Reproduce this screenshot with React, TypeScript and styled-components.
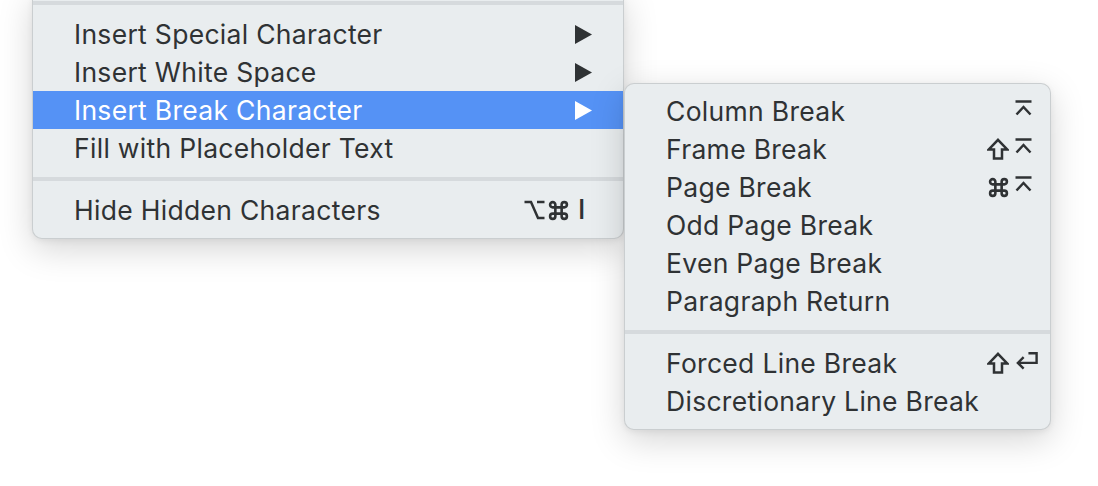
import React from "react";
import styled, { createGlobalStyle } from "styled-components";

const Global = createGlobalStyle`
  html, body { margin: 0; padding: 0; background: #ffffff; }
  body { font-family: Inter, "Noto Sans", "Liberation Sans", sans-serif; overflow: hidden; }
`;

const INK = "#2f3234";

const Page = styled.div`
  display: flex;
  align-items: flex-start;
  padding-left: 32px;
  width: 1098px;
  height: 486px;
  box-sizing: border-box;
  overflow: hidden;
`;

const MenuPanel = styled.div<{ $top: number; $width: number; $padR: number; $padT: number }>`
  display: flex;
  flex-direction: column;
  margin-top: ${(p) => p.$top}px;
  width: ${(p) => p.$width}px;
  padding: ${(p) => p.$padT}px 0 9px 0;
  box-sizing: border-box;
  background: #e9edef;
  border: 1px solid rgba(0, 0, 0, 0.13);
  border-radius: 10px;
  box-shadow: 0 10px 34px rgba(0, 0, 0, 0.17), 0 2px 6px rgba(0, 0, 0, 0.06);
  --pad-r: ${(p) => p.$padR}px;
  position: relative;
`;

const Row = styled.div<{ $active?: boolean }>`
  display: flex;
  align-items: center;
  justify-content: space-between;
  height: 38px;
  padding-left: 41px;
  padding-right: var(--pad-r);
  background: ${(p) => (p.$active ? "#5592f5" : "transparent")};
  color: ${(p) => (p.$active ? "#ffffff" : INK)};
  font-size: 26.5px;
  letter-spacing: 0.3px;
  white-space: nowrap;
`;

const Label = styled.span`
  line-height: 38px;
`;

const Trailing = styled.div`
  display: flex;
  align-items: center;
  gap: 6px;
`;

const Mods = styled.div`
  display: flex;
  align-items: center;
  gap: 3px;
`;

const KeyCell = styled.div`
  width: 24px;
  display: flex;
  align-items: center;
  justify-content: flex-start;
  line-height: 38px;
`;

const KeyText = styled.span`
  padding-left: 3px;
  font-size: 27px;
  font-weight: 500;
`;

const Separator = styled.div`
  height: 24px;
  display: flex;
  align-items: center;
  &::after {
    content: "";
    display: block;
    width: 100%;
    height: 4px;
    background: #d6dadd;
  }
`;

const Glyph = styled.svg`
  display: block;
  fill: none;
  stroke: currentColor;
  stroke-width: 2.5;
  stroke-linejoin: miter;
`;

const Arrow = () => (
  <svg width="17" height="19" viewBox="0 0 17 19" style={{ display: "block" }}>
    <polygon points="0,0 17,9.5 0,19" fill="currentColor" />
  </svg>
);

const Enter = () => (
  <Glyph width="17" height="16" viewBox="0 0 17 16" style={{ marginTop: -6 }}>
    <path d="M0.5 1.5 H16.5" />
    <path d="M1.5 14.5 L8.5 7 L15.5 14.5" />
  </Glyph>
);

const Shift = () => (
  <Glyph width="22" height="22" viewBox="0 0 22 22">
    <path d="M11 1.8 L20.2 11.5 H15 V20.5 H7 V11.5 H1.8 Z" />
  </Glyph>
);

const Cmd = () => (
  <Glyph width="21" height="21" viewBox="0 0 20 20">
    <path d="M7 7 V4.5 A2.5 2.5 0 1 0 4.5 7 H15.5 A2.5 2.5 0 1 0 13 4.5 V15.5 A2.5 2.5 0 1 0 15.5 13 H4.5 A2.5 2.5 0 1 0 7 15.5 Z" />
  </Glyph>
);

const Opt = () => (
  <Glyph width="21" height="20" viewBox="0 0 21 20">
    <path d="M0.5 2 H7 L14 18 H20.5" />
    <path d="M13 2 H20.5" />
  </Glyph>
);

const Return = () => (
  <Glyph width="25" height="20" viewBox="0 0 25 20" style={{ marginTop: -4 }}>
    <path d="M14 2 H22.5 V12 H3" />
    <path d="M9 6 L3 12 L9 18" />
  </Glyph>
);

type Item =
  | { kind: "sep" }
  | {
      kind: "item";
      label: string;
      active?: boolean;
      sub?: boolean;
      mods?: React.ReactNode[];
      keyGlyph?: React.ReactNode;
    };

const mainItems: Item[] = [
  { kind: "sep" },
  { kind: "item", label: "Insert Special Character", sub: true },
  { kind: "item", label: "Insert White Space", sub: true },
  { kind: "item", label: "Insert Break Character", sub: true, active: true },
  { kind: "item", label: "Fill with Placeholder Text" },
  { kind: "sep" },
  {
    kind: "item",
    label: "Hide Hidden Characters",
    mods: [<Opt key="o" />, <Cmd key="c" />],
    keyGlyph: <KeyText>I</KeyText>,
  },
];

const subItems: Item[] = [
  { kind: "item", label: "Column Break", mods: [], keyGlyph: <Enter /> },
  { kind: "item", label: "Frame Break", mods: [<Shift key="s" />], keyGlyph: <Enter /> },
  { kind: "item", label: "Page Break", mods: [<Cmd key="c" />], keyGlyph: <Enter /> },
  { kind: "item", label: "Odd Page Break" },
  { kind: "item", label: "Even Page Break" },
  { kind: "item", label: "Paragraph Return" },
  { kind: "sep" },
  { kind: "item", label: "Forced Line Break", mods: [<Shift key="s" />], keyGlyph: <Return /> },
  { kind: "item", label: "Discretionary Line Break" },
];

const MenuRows = ({ items }: { items: Item[] }) => (
  <>
    {items.map((it, i) =>
      it.kind === "sep" ? (
        <Separator key={i} />
      ) : (
        <Row key={i} $active={it.active}>
          <Label>{it.label}</Label>
          <Trailing>
            {it.mods && it.mods.length > 0 && <Mods>{it.mods}</Mods>}
            {(it.sub || it.keyGlyph) && (
              <KeyCell>{it.sub ? <Arrow /> : it.keyGlyph}</KeyCell>
            )}
          </Trailing>
        </Row>
      )
    )}
  </>
);

export default function App() {
  return (
    <>
      <Global />
      <Page>
        <MenuPanel $top={-10} $width={592} $padR={24} $padT={0}>
          <MenuRows items={mainItems} />
        </MenuPanel>
        <MenuPanel $top={83} $width={427} $padR={11} $padT={8}>
          <MenuRows items={subItems} />
        </MenuPanel>
      </Page>
    </>
  );
}
